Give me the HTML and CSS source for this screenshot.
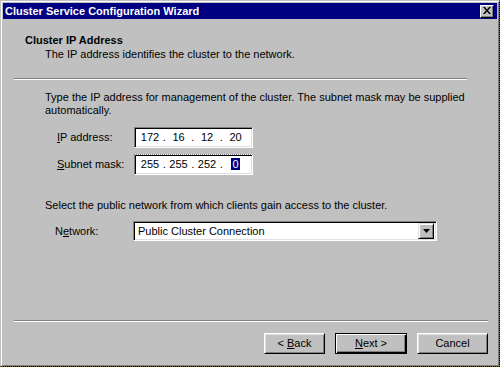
FILE: index.html
```html
<!DOCTYPE html>
<html lang="en">
<head>
    <meta charset="UTF-8">
    <title>Cluster Service Configuration Wizard</title>
    <link rel="stylesheet" href="styles.css">
</head>
<body>
    <div class="window">
        <div class="titlebar">
            <span class="title-text">Cluster Service Configuration Wizard</span>
            <div class="close-btn">
                <svg width="8" height="7" viewBox="0 0 8 7">
                    <path d="M0 0h2l2 2.5 2-2.5h2l-3 3.5 3 3.5h-2l-2-2.5-2 2.5h-2l3-3.5z" fill="#000"/>
                </svg>
            </div>
        </div>

        <div class="header">
            <div class="head-title">Cluster IP Address</div>
            <div class="head-sub">The IP address identifies the cluster to the network.</div>
        </div>
        <div class="etched etched-top"></div>

        <div class="content">
            <p class="intro">Type the IP address for management of the cluster. The subnet mask may be supplied<br>automatically.</p>

            <div class="field">
                <label><u>I</u>P address:</label>
                <div class="ipbox">
                    <span class="octet">172</span><span class="dot">.</span><span class="octet">16</span><span class="dot">.</span><span class="octet">12</span><span class="dot">.</span><span class="octet">20</span>
                </div>
            </div>
            <div class="field">
                <label><u>S</u>ubnet mask:</label>
                <div class="ipbox focused">
                    <span class="octet">255</span><span class="dot">.</span><span class="octet">255</span><span class="dot">.</span><span class="octet">252</span><span class="dot">.</span><span class="octet"><span class="sel">0</span></span>
                </div>
            </div>

            <p class="select-text">Select the public network from which clients gain access to the cluster.</p>

            <div class="field net-field">
                <label class="net-label">N<u>e</u>twork:</label>
                <div class="combo">
                    <span class="combo-text">Public Cluster Connection</span>
                    <div class="combo-btn">
                        <svg width="7" height="4" viewBox="0 0 7 4"><path d="M0 0h7l-3.5 4z" fill="#000"/></svg>
                    </div>
                </div>
            </div>
        </div>

        <div class="etched etched-bottom"></div>

        <div class="buttons">
            <div class="btn btn-back"><span>&lt; <u>B</u>ack</span></div>
            <div class="btn btn-next"><span><u>N</u>ext &gt;</span></div>
            <div class="btn btn-cancel"><span>Cancel</span></div>
        </div>
    </div>
</body>
</html>
```

FILE: styles.css
```css
body {
    margin: 0;
    background: #6b5020;
    font-family: "Liberation Sans", Arial, sans-serif;
    font-size: 11px;
    line-height: 13px;
    color: #000;
}

.window {
    width: 500px;
    height: 367px;
    box-sizing: border-box;
    background: #c0c0c0;
    background-clip: padding-box;
    border: 1px solid;
    border-color: #c0c0c0 #000 #000 #c0c0c0;
    border-right-style: dotted;
    border-bottom-style: dotted;
    box-shadow: inset 1px 1px 0 #fff, inset -1px -1px 0 #808080;
    padding: 2px;
}

/* title bar */
.titlebar {
    height: 16px;
    background: #000080;
    display: flex;
    align-items: center;
    justify-content: space-between;
    padding-left: 2px;
}

.title-text {
    color: #fff;
    font-weight: bold;
    font-size: 11px;
}

.close-btn {
    width: 14px;
    height: 13px;
    box-sizing: border-box;
    margin-right: 3px;
    background: #c0c0c0;
    border: 1px solid;
    border-color: #fff #000 #000 #fff;
    box-shadow: inset -1px -1px 0 #808080;
    display: flex;
    align-items: center;
    justify-content: center;
    padding: 0 1px 1px 0;
}

.close-btn svg {
    display: block;
}

/* header */
.header {
    padding: 15px 0 0 22px;
}

.head-title {
    font-weight: bold;
}

.head-sub {
    margin: 1px 0 0 20px;
}

.etched {
    height: 0;
    border-top: 1px solid #808080;
    border-bottom: 1px solid #fff;
}

.etched-top {
    margin: 17px 0 0 11px;
    width: 453px;
}

.etched-bottom {
    margin: 0 0 0 11px;
    width: 474px;
}

/* content */
.content {
    padding: 11px 0 0 42px;
    height: 240px;
    box-sizing: border-box;
}

.intro {
    margin: 0;
}

.field {
    display: flex;
    align-items: center;
    height: 21px;
    margin-top: 6px;
}

.intro + .field {
    margin-top: 10px;
}

.field label {
    flex-shrink: 0;
    width: 89px;
    padding-left: 12px;
    box-sizing: border-box;
}

.ipbox {
    width: 119px;
    height: 21px;
    box-sizing: border-box;
    background: #fff;
    border: 1px solid;
    border-color: #808080 #fff #fff #808080;
    box-shadow: inset 1px 1px 0 #000, inset -1px -1px 0 #dfdfdf;
    display: flex;
    align-items: center;
    padding-left: 4px;
}

.ipbox.focused {
    border-top-style: dotted;
}

.octet {
    width: 22px;
    text-align: center;
}

.dot {
    width: 6.5px;
    text-align: center;
}

.sel {
    background: #000080;
    color: #fff;
    padding: 0 1px;
}

.select-text {
    margin: 24px 0 0;
}

.net-field {
    height: 20px;
    margin-top: 9px;
}

.field .net-label {
    padding-left: 10px;
    width: 88px;
}

.combo {
    width: 304px;
    height: 20px;
    box-sizing: border-box;
    background: #fff;
    border: 1px solid;
    border-color: #808080 #fff #fff #808080;
    box-shadow: inset 1px 1px 0 #000, inset -1px -1px 0 #dfdfdf;
    display: flex;
    align-items: center;
    justify-content: space-between;
    padding: 2px 2px 2px 4px;
}

.combo-btn {
    width: 16px;
    height: 16px;
    box-sizing: border-box;
    background: #c0c0c0;
    border: 1px solid;
    border-color: #dfdfdf #000 #000 #dfdfdf;
    box-shadow: inset 1px 1px 0 #fff, inset -1px -1px 0 #808080;
    display: flex;
    align-items: center;
    justify-content: center;
}

.combo-btn svg {
    display: block;
}

/* footer buttons */
.buttons {
    display: flex;
    justify-content: flex-end;
    gap: 10px;
    padding-right: 9px;
    margin-top: 11px;
}

.btn {
    height: 21px;
    box-sizing: border-box;
    background: #c0c0c0;
    border: 1px solid;
    border-color: #fff #000 #000 #fff;
    box-shadow: inset 1px 1px 0 #dfdfdf, inset -1px -1px 0 #808080;
    display: flex;
    align-items: center;
    justify-content: center;
}

.btn-back {
    width: 61px;
}

.btn-next {
    width: 72px;
    border: 1px solid #000;
    box-shadow: inset 1px 1px 0 #fff, inset -1px -1px 0 #000, inset -2px -2px 0 #808080;
}

.btn-cancel {
    width: 71px;
}
```
